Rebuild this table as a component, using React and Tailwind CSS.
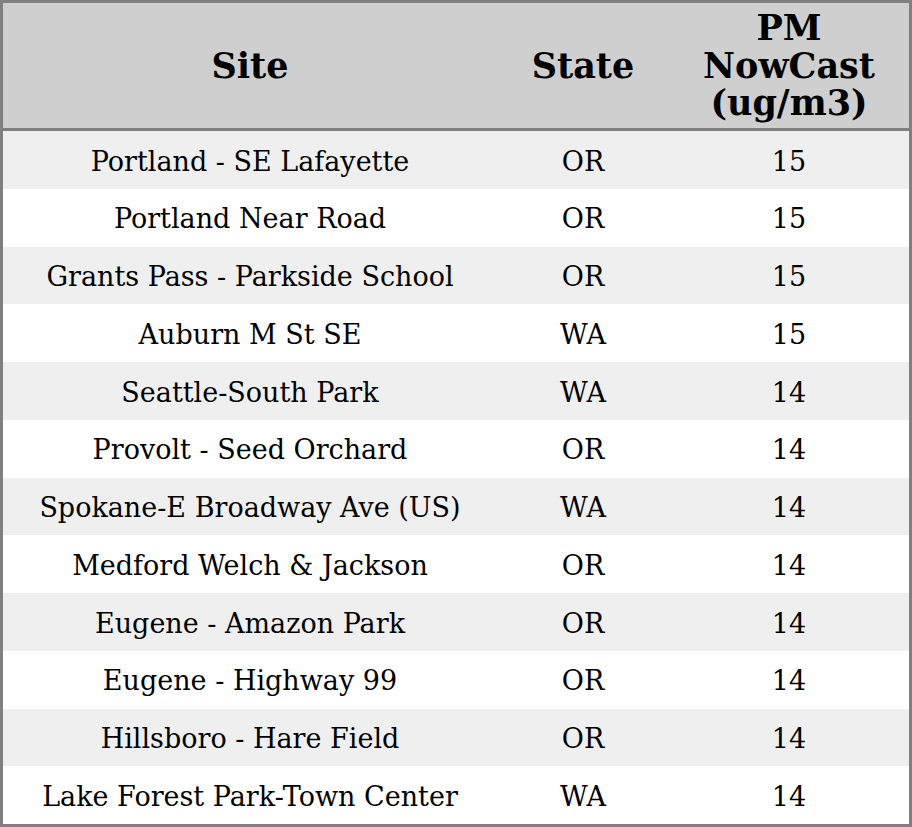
const rows = [
  ['Portland - SE Lafayette', 'OR', 15],
  ['Portland Near Road', 'OR', 15],
  ['Grants Pass - Parkside School', 'OR', 15],
  ['Auburn M St SE', 'WA', 15],
  ['Seattle-South Park', 'WA', 14],
  ['Provolt - Seed Orchard', 'OR', 14],
  ['Spokane-E Broadway Ave (US)', 'WA', 14],
  ['Medford Welch & Jackson', 'OR', 14],
  ['Eugene - Amazon Park', 'OR', 14],
  ['Eugene - Highway 99', 'OR', 14],
  ['Hillsboro - Hare Field', 'OR', 14],
  ['Lake Forest Park-Town Center', 'WA', 14],
];

export default function App() {
  return (
    <div
      className="w-[912px] h-[827px] bg-white text-black"
      style={{ fontFamily: '"DejaVu Serif", serif' }}
    >
      <div className="h-full border-[3px] border-[#808080] flex flex-col">
        <div className="grid grid-cols-[494px_172px_1fr] h-[128px] shrink-0 bg-[#cfcfcf] border-b-[3px] border-[#808080] font-bold text-[35px] leading-[37.5px]">
          <div className="flex items-center justify-center text-center">Site</div>
          <div className="flex items-center justify-center text-center">State</div>
          <div className="flex items-center justify-center text-center">
            PM
            <br />
            NowCast
            <br />
            (ug/m3)
          </div>
        </div>
        <div className="flex-1 grid grid-rows-12">
          {rows.map(([site, state, val], i) => (
            <div
              key={site}
              className={`grid grid-cols-[494px_172px_1fr] items-center text-center text-[27px] pt-[4px] ${
                i % 2 === 0 ? 'bg-[#efefef]' : 'bg-white'
              }`}
            >
              <div>{site}</div>
              <div>{state}</div>
              <div>{val}</div>
            </div>
          ))}
        </div>
      </div>
    </div>
  );
}
